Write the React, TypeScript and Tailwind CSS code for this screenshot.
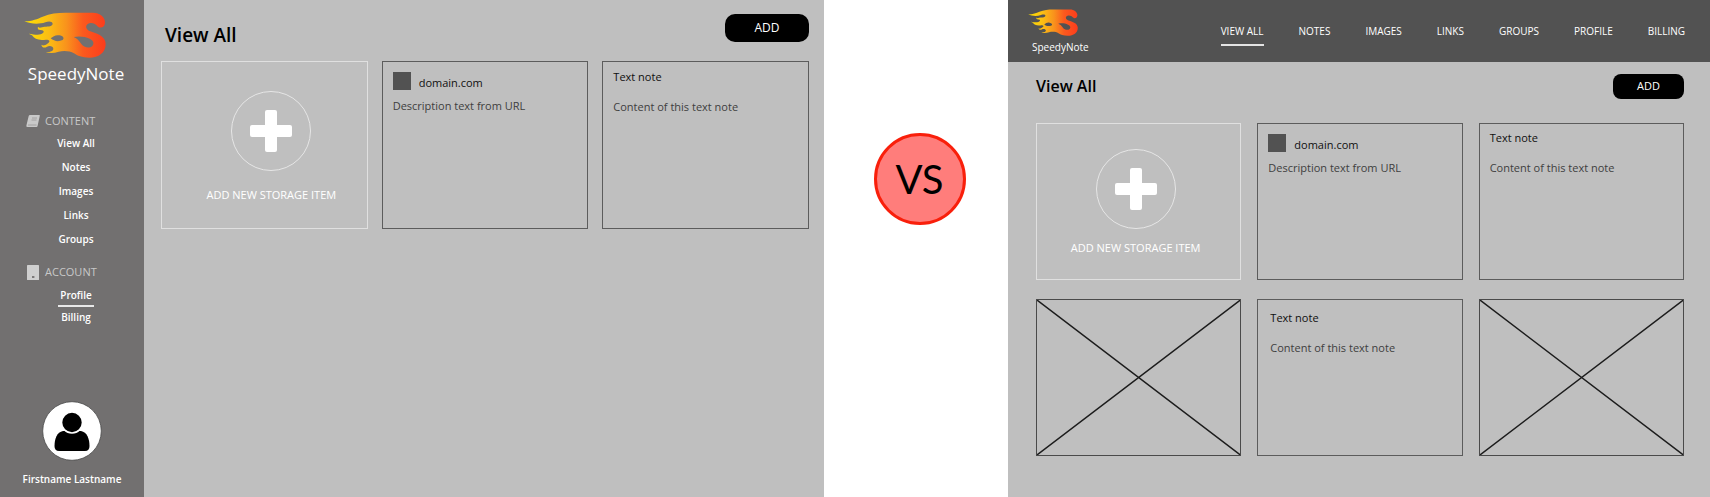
import type { ReactNode } from "react";

function FlameLogo({ id, className }: { id: string; className: string }) {
  return (
    <svg viewBox="72 34 246 138" preserveAspectRatio="none" className={className} aria-hidden="true">
      <defs>
        <linearGradient id={id} x1="0" x2="1" y1="0" y2="0">
          <stop offset="0" stopColor="#fde200" />
          <stop offset="0.3" stopColor="#fbbd14" />
          <stop offset="0.52" stopColor="#f9921c" />
          <stop offset="0.72" stopColor="#fb5a1e" />
          <stop offset="1" stopColor="#fd3c1c" />
        </linearGradient>
      </defs>
      <path
        fill={`url(#${id})`}
        fillRule="evenodd"
        d="M73 62C98 61 112 55 128 48C150 38 172 36 196 36L278 36C300 36 316 50 315 66C314 80 302 84 294 78C288 71 280 66 271 67C256 69 254 84 268 91C286 98 317 104 317 130C317 156 296 171 268 171C246 171 232 165 222 158C210 150 190 149 176 153C162 158 148 158 137 154C150 155 160 151 160 144C160 136 148 134 141 138C134 143 126 141 124 132C130 137 136 133 142 129C152 122 150 117 138 117C116 120 104 116 96 104L86 99C100 101 112 104 122 101C134 97 134 88 122 88C114 88 112 84 114 78C118 84 126 79 134 78C146 78 158 76 158 69C157 62 146 61 136 65C116 72 92 70 73 62ZM152 113C162 122 176 124 188 118C194 113 190 106 178 104C166 102 160 107 152 113ZM221 109C232 113 237 120 244 130C252 141 268 144 277 136C284 128 280 119 269 114C256 108 238 105 221 109Z"
      />
    </svg>
  );
}

function BookIcon() {
  return (
    <svg viewBox="0 0 14 14" className="h-[14px] w-[14px] shrink-0" aria-hidden="true">
      <path d="M4 1h9.300q.7 0 .5.700L11.500 12.300q-.2.700-1 .7H1.500Q0 13 .4 11.400L2.700 2Q3 1 4 1Z" fill="#c9c9c9" />
      <path d="M6 4h5M5.500 6h5M2 11h8.500" stroke="#9a9898" strokeWidth="0.8" />
    </svg>
  );
}

function BuildingIcon() {
  return (
    <svg viewBox="0 0 12 15" className="mx-px h-[15px] w-[12px] shrink-0" aria-hidden="true">
      <rect width="12" height="15" rx="0.6" fill="#cfcfcf" />
      <rect x="5" y="11" width="2.400" height="2" fill="#7b7979" />
    </svg>
  );
}

function PlusIcon() {
  return (
    <svg viewBox="0 0 42 42" className="h-[42px] w-[42px]" fill="#fff" aria-hidden="true">
      <rect x="15" y="0" width="12" height="42" rx="2" />
      <rect x="0" y="15" width="42" height="12" rx="2" />
    </svg>
  );
}

function Avatar() {
  return (
    <svg viewBox="0 0 60 60" className="h-[60px] w-[60px]" role="img" aria-label="User avatar">
      <circle cx="30" cy="30" r="29.300" fill="#fff" stroke="#4a4a4a" strokeWidth="0.800" />
      <path d="M21 30H39C45 31 47.500 38 47.500 45Q47.500 50 43 50H17Q12.500 50 12.500 45C12.500 38 15 31 21 30Z" />
      <circle cx="30" cy="21.500" r="10.500" stroke="#fff" strokeWidth="1.600" />
    </svg>
  );
}

function AddItemCard({ className, labelClassName }: { className: string; labelClassName: string }) {
  return (
    <button type="button" className={`flex flex-col items-center border border-[#e0e0e0] text-white ${className}`}>
      <span className="flex h-20 w-20 items-center justify-center rounded-full border border-[#e6e6e6]">
        <PlusIcon />
      </span>
      <span className={`text-[11px] leading-4 ${labelClassName}`}>ADD NEW STORAGE ITEM</span>
    </button>
  );
}

function DomainCard() {
  return (
    <article className="border border-[#5c5c5c] px-[10px] pt-[10px]">
      <div className="flex items-end gap-2">
        <span className="h-[18px] w-[18px] bg-[#525252]" />
        <h3 className="text-[11px] leading-[14px] text-[#101010]">domain.com</h3>
      </div>
      <p className="mt-2 text-[11px] leading-4 text-[#404040]">Description text from URL</p>
    </article>
  );
}

function TextCard({ className }: { className: string }) {
  return (
    <article className={`border border-[#5c5c5c] ${className}`}>
      <h3 className="text-[11px] leading-4 text-[#101010]">Text note</h3>
      <p className="mt-[14px] text-[11px] leading-4 text-[#404040]">Content of this text note</p>
    </article>
  );
}

function Placeholder() {
  return (
    <div className="flex border border-[#4a4a4a]">
      <svg viewBox="0 0 204 155" preserveAspectRatio="none" className="h-[155px] w-full" aria-hidden="true">
        <path d="M0 0L204 155M204 0L0 155" stroke="#1c1c1c" strokeWidth="1.400" />
      </svg>
    </div>
  );
}

function SideHeading({ icon, children }: { icon: ReactNode; children: ReactNode }) {
  return (
    <h2 className="flex items-center gap-[5px] pl-[18px] text-[11px] leading-4 text-[#c8c8c8]">
      {icon}
      {children}
    </h2>
  );
}

const contentLinks = ["View All", "Notes", "Images", "Links", "Groups"];
const topLinks = ["NOTES", "IMAGES", "LINKS", "GROUPS", "PROFILE", "BILLING"];

function SidebarLayout() {
  return (
    <section className="flex bg-[#bfbfbf]">
      <aside className="flex w-36 shrink-0 flex-col bg-[#727070] pt-3 pb-[10px] text-white">
        <FlameLogo id="flame-side" className="ml-6 h-[46px] w-[82px]" />
        <div className="mt-1 pl-2 text-center text-[17px] leading-6">SpeedyNote</div>
        <nav className="mt-[27px] pl-2" aria-label="Sidebar">
          <SideHeading icon={<BookIcon />}>CONTENT</SideHeading>
          <ul className="mt-[2px] flex flex-col items-center text-[10px] leading-6 font-semibold">
            {contentLinks.map((label) => (
              <li key={label}>
                <a href="#">{label}</a>
              </li>
            ))}
          </ul>
          <div className="mt-[13px]">
            <SideHeading icon={<BuildingIcon />}>ACCOUNT</SideHeading>
          </div>
          <ul className="mt-[5px] flex flex-col items-center text-[10px] leading-5 font-semibold">
            <li className="border-b-2 border-[#e8e8e8] px-[2px]">
              <a href="#">Profile</a>
            </li>
            <li>
              <a href="#">Billing</a>
            </li>
          </ul>
        </nav>
        <div className="mt-auto flex flex-col items-center gap-[10px]">
          <Avatar />
          <div className="text-[10px] leading-4 font-semibold">Firstname Lastname</div>
        </div>
      </aside>
      <main className="min-w-0 grow pt-[14px] pr-[15px] pl-[17px]">
        <div className="flex items-start justify-between">
          <h1 className="pt-[7px] pl-1 text-[19px] leading-7 font-semibold text-black">View All</h1>
          <button type="button" className="h-7 w-[84px] rounded-[10px] bg-black text-xs text-white">
            ADD
          </button>
        </div>
        <div className="mt-3 grid min-h-[168px] grid-cols-3 gap-[14px]">
          <AddItemCard className="pt-[29px] pl-[14px]" labelClassName="mt-4" />
          <DomainCard />
          <TextCard className="px-[10px] pt-[7px]" />
        </div>
      </main>
    </section>
  );
}

function TopbarLayout() {
  return (
    <section className="bg-[#bfbfbf]">
      <header className="flex justify-between bg-[#525252] pr-[25px] pl-5 text-white">
        <div className="pt-[9px] pb-[6px]">
          <FlameLogo id="flame-top" className="h-[27px] w-[50px]" />
          <div className="pt-[2px] pl-1 text-[10px] leading-[18px]">SpeedyNote</div>
        </div>
        <nav className="flex items-start gap-[35px] pt-[22px] text-[10px] leading-[18px]" aria-label="Main">
          <a href="#" className="border-b-2 border-[#e4e4e4] pb-1">
            VIEW ALL
          </a>
          {topLinks.map((label) => (
            <a href="#" key={label}>
              {label}
            </a>
          ))}
        </nav>
      </header>
      <main className="pt-[11px] pr-[26px] pb-10 pl-7">
        <div className="flex items-center justify-between">
          <h1 className="pt-px text-base leading-[25px] font-semibold text-black">View All</h1>
          <button type="button" className="h-[25px] w-[71px] rounded-lg bg-black text-[11px] text-white">
            ADD
          </button>
        </div>
        <div className="mt-6 grid auto-rows-[minmax(157px,auto)] grid-cols-3 gap-x-4 gap-y-[19px]">
          <AddItemCard className="pt-[25px] pr-[6px]" labelClassName="mt-[11px]" />
          <DomainCard />
          <TextCard className="px-[10px] pt-[6px]" />
          <Placeholder />
          <TextCard className="px-3 pt-[10px]" />
          <Placeholder />
        </div>
      </main>
    </section>
  );
}

export default function App() {
  return (
    <div className="grid min-h-screen grid-cols-[824fr_184fr_702fr] bg-white font-['Open_Sans','Noto_Sans',sans-serif]">
      <SidebarLayout />
      <div className="flex justify-center pt-[133px] pl-[7px]">
        <div className="flex h-[92px] w-[92px] items-center justify-center rounded-full border-3 border-[#f91f0b] bg-[#ff7d7b] font-['Lato',sans-serif] text-[40px] leading-none text-black">
          VS
        </div>
      </div>
      <TopbarLayout />
    </div>
  );
}
